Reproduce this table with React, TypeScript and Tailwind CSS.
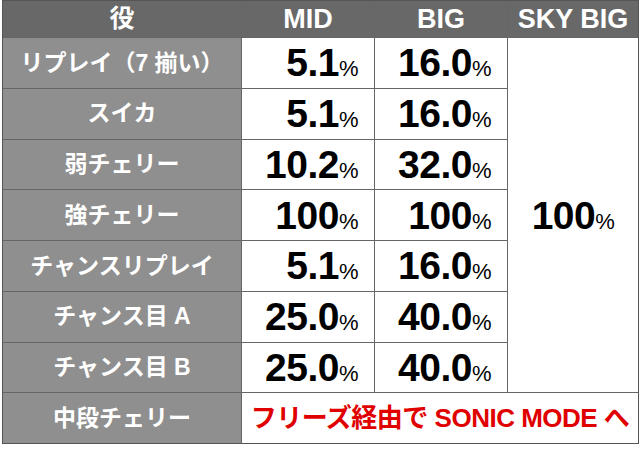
// Payout odds table: role vs MID / BIG / SKY BIG

const rows = [
  { label: 'リプレイ（7 揃い）', mid: '5.1', big: '16.0' },
  { label: 'スイカ', mid: '5.1', big: '16.0' },
  { label: '弱チェリー', mid: '10.2', big: '32.0' },
  { label: '強チェリー', mid: '100', big: '100' },
  { label: 'チャンスリプレイ', mid: '5.1', big: '16.0' },
  { label: 'チャンス目 A', mid: '25.0', big: '40.0' },
  { label: 'チャンス目 B', mid: '25.0', big: '40.0' },
]

const font = { fontFamily: '"Liberation Sans", "Noto Sans CJK JP", sans-serif' }

function Pct({ value }: { value: string }) {
  return (
    <span className="font-bold text-black leading-none tracking-[-0.5px]">
      <span className="text-[39px]">{value}</span>
      <span className="text-[22px] font-normal">%</span>
    </span>
  )
}

export default function App() {
  return (
    <div className="w-[640px] h-[458px] bg-white" style={font}>
      <div className="ml-[2px] w-[637px] border border-[#555] bg-[#666] grid grid-cols-[238px_132px_132px_1fr] grid-rows-[36px_repeat(8,_1fr)] h-[444px] gap-px">
        {/* header */}
        <div className="bg-[#686868] flex items-center justify-center text-white font-bold text-[25px]">役</div>
        <div className="bg-[#686868] flex items-center justify-center text-white font-bold text-[27px]">MID</div>
        <div className="bg-[#686868] flex items-center justify-center text-white font-bold text-[27px]">BIG</div>
        <div className="bg-[#686868] flex items-center justify-center text-white font-bold text-[27px]">SKY BIG</div>

        {rows.map((r, i) => (
          <div key={r.label} className="contents">
            <div
              className="bg-[#8f8f8f] flex items-center justify-center text-white font-bold text-[23px]"
              style={{ gridColumn: 1, gridRow: i + 2 }}
            >
              {r.label}
            </div>
            <div className="bg-white flex items-center justify-end pr-4" style={{ gridColumn: 2, gridRow: i + 2 }}>
              <Pct value={r.mid} />
            </div>
            <div className="bg-white flex items-center justify-end pr-4" style={{ gridColumn: 3, gridRow: i + 2 }}>
              <Pct value={r.big} />
            </div>
          </div>
        ))}

        {/* merged SKY BIG */}
        <div className="bg-white flex items-center justify-center col-start-4 row-start-2 row-end-9">
          <Pct value="100" />
        </div>

        {/* last row */}
        <div className="bg-[#8f8f8f] flex items-center justify-center text-white font-bold text-[23px] col-start-1 row-start-9">
          中段チェリー
        </div>
        <div className="bg-white flex items-center justify-center col-start-2 col-end-5 row-start-9 text-[#e00000] font-bold text-[26px] tracking-[-0.5px]">
          フリーズ経由で SONIC MODE へ
        </div>
      </div>
    </div>
  )
}
